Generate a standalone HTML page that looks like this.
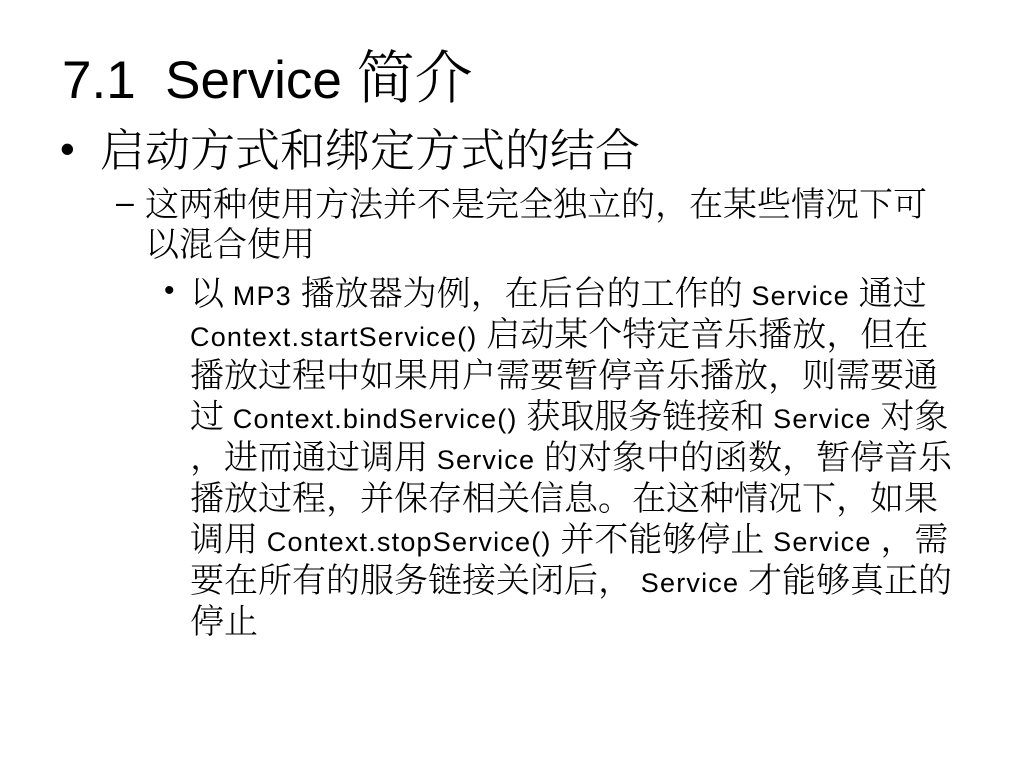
<!DOCTYPE html>
<html><head><meta charset="utf-8"><style>
body{margin:0;width:1024px;height:768px;background:#fff;position:relative;overflow:hidden;color:#000;font-family:"Liberation Sans","Noto Serif CJK SC",serif;}
.l{position:absolute;white-space:nowrap;line-height:1;}
.e{font-family:"Liberation Sans",sans-serif;}
.c{font-family:"Noto Serif CJK SC",serif;font-weight:300;}
.s{font-family:"Liberation Sans",sans-serif;font-size:27px;letter-spacing:1.2px;}
</style></head><body>
<div class="l" style="left:62px;top:44px;font-size:53px"><span class="e">7.1&nbsp; Service </span><span class="c" style="font-size:58px">简介</span></div>
<div class="l e" style="left:60px;top:128px;font-size:42px">•</div>
<div class="l c" style="left:100px;top:124px;font-size:45px">启动方式和绑定方式的结合</div>
<div class="l e" style="left:116px;top:186px;font-size:32px">–</div>
<div class="l c" style="left:145px;top:185px;font-size:34px">这两种使用方法并不是完全独立的，在某些情况下可</div>
<div class="l c" style="left:145px;top:225px;font-size:34px">以混合使用</div>
<div class="l e" style="left:164px;top:276px;font-size:30px">•</div>
<div style="position:absolute;left:190px;top:274px;font-size:34px;line-height:41px" class="c">
<div class="l" style="top:0">以 <span class="s">MP3</span> 播放器为例，在后台的工作的 <span class="s">Service</span> 通过</div>
<div class="l" style="top:41px"><span class="s">Context.startService()</span> 启动某个特定音乐播放，但在</div>
<div class="l" style="top:82px">播放过程中如果用户需要暂停音乐播放，则需要通</div>
<div class="l" style="top:123px">过 <span class="s">Context.bindService()</span> 获取服务链接和 <span class="s">Service</span> 对象</div>
<div class="l" style="top:164px">，进而通过调用 <span class="s">Service</span> 的对象中的函数，暂停音乐</div>
<div class="l" style="top:205px">播放过程，并保存相关信息。在这种情况下，如果</div>
<div class="l" style="top:246px">调用 <span class="s">Context.stopService()</span> 并不能够停止 <span class="s">Service</span> ，需</div>
<div class="l" style="top:287px">要在所有的服务链接关闭后， <span class="s">Service</span> 才能够真正的</div>
<div class="l" style="top:328px">停止</div>
</div>
</body></html>
